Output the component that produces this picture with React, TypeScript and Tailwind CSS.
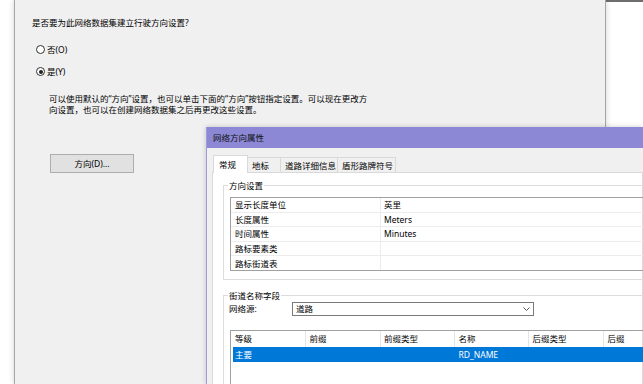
import React from "react";

function Radio({ checked, label, className }: { checked?: boolean; label: string; className: string }) {
  return (
    <div className={className}>
      <span className="w-[9px] h-[9px] rounded-full border border-[#333333] bg-white flex items-center justify-center shrink-0">
        {checked && <span className="w-[4px] h-[4px] rounded-full bg-[#222222]" />}
      </span>
      <span className="ml-[2px] leading-[11px]">{label}</span>
    </div>
  );
}

const rows: [string, string][] = [
  ["显示长度单位", "英里"],
  ["长度属性", "Meters"],
  ["时间属性", "Minutes"],
  ["路标要素类", ""],
  ["路标街道表", ""],
];

export default function App() {
  return (
    <div className="relative w-[643px] h-[384px] overflow-hidden bg-white flex font-['Noto_Sans','Noto_Sans_CJK_SC',sans-serif] text-[8.5px] text-black">
      <div className="w-[14px] shrink-0" />
      {/* back dialog */}
      <div className="relative z-[1] w-[592px] shrink-0 h-full bg-[#f0f0f0] border-x border-[#a6a6a6] shadow-[0_0_6px_rgba(0,0,0,0.18)] flex flex-col pt-[17px]">
        <div className="ml-[17px] leading-[11px]">是否要为此网络数据集建立行驶方向设置?</div>
        <Radio className="ml-[21px] mt-[16px] h-[11px] flex items-center" label="否(O)" />
        <Radio className="ml-[21px] mt-[11px] h-[11px] flex items-center" checked label="是(Y)" />
        <div className="ml-[34px] mt-[16px] leading-[11px]">
          <div>可以使用默认的“方向”设置，也可以单击下面的“方向”按钮指定设置。可以现在更改方</div>
          <div>向设置，也可以在创建网络数据集之后再更改这些设置。</div>
        </div>
        <div className="ml-[35px] mt-[39px] w-[84px] h-[19px] bg-[#e1e1e1] border border-[#adadad] flex items-center justify-center leading-[11px]">
          方向(D)...
        </div>
      </div>
      <div className="flex-1 h-full border-t-2 border-[#6e6e6e]" />

      {/* front dialog */}
      <div className="absolute z-[2] left-[206px] top-[127px] w-[437px] h-[257px] border-l border-[#9f9cdb] shadow-[0_0_5px_rgba(0,0,0,0.2)] flex flex-col bg-[#f0f0f0]">
        <div className="h-[21px] shrink-0 bg-[#8c88d6] flex items-center pl-[6px] leading-[11px] text-[#111111]">网络方向属性</div>
        <div className="flex-1 flex flex-col pl-[5px] pt-[7px]">
          <div className="relative z-[3] ml-[1px] h-[17px] flex items-end leading-[11px]">
            <div className="shrink-0 w-[35px] h-[18px] -mb-[1px] bg-white border border-b-0 border-[#d9d9d9] pl-[5px] flex items-center">常规</div>
            <div className="shrink-0 -ml-[1px] w-[34px] h-[15px] bg-[#f0f0f0] border border-b-0 border-[#d9d9d9] pl-[4px] flex items-center">地标</div>
            <div className="shrink-0 -ml-[1px] w-[58px] h-[15px] bg-[#f0f0f0] border border-b-0 border-[#d9d9d9] pl-[4px] flex items-center">道路详细信息</div>
            <div className="shrink-0 -ml-[1px] w-[59px] h-[15px] bg-[#f0f0f0] border border-b-0 border-[#d9d9d9] pl-[4px] flex items-center">盾形路牌符号</div>
          </div>
          <div className="flex-1 bg-white border border-[#d9d9d9] flex flex-col">
            <fieldset className="ml-[10px] mt-[7px] w-[480px] border border-[#dcdcdc] pb-[8px]">
              <legend className="ml-[4px] px-[1px] leading-[11px]">方向设置</legend>
              <div className="ml-[6px] mt-[6px] w-[460px] border-x border-t border-[#a0a0a0]">
                {rows.map(([k, v], i) => (
                  <div
                    key={k}
                    className={
                      i === rows.length - 1
                        ? "h-[14.6px] flex border-b border-[#a0a0a0]"
                        : "h-[14.6px] flex border-b border-[#ececec]"
                    }
                  >
                    <div className="shrink-0 w-[150px] border-r border-[#ececec] pl-[4px] flex items-center leading-[11px]">{k}</div>
                    <div className="pl-[3px] flex items-center leading-[11px]">{v}</div>
                  </div>
                ))}
              </div>
            </fieldset>
            <fieldset className="ml-[10px] mt-[10px] w-[480px] h-[120px] border border-[#dcdcdc]">
              <legend className="ml-[4px] px-[1px] leading-[11px]">街道名称字段</legend>
              <div className="mt-[1px] h-[14px] flex items-center">
                <div className="shrink-0 pl-[5px] w-[68px] leading-[11px]">网络源:</div>
                <div className="shrink-0 w-[242px] h-[14px] border border-[#7a7a7a] bg-white flex items-center justify-between pl-[3px] pr-[3px] leading-[11px]">
                  <span>道路</span>
                  <svg width="7" height="4" viewBox="0 0 7 4" className="mt-[1px]">
                    <path d="M0.5 0.5 L3.5 3.5 L6.5 0.5" fill="none" stroke="#444444" strokeWidth="0.9" />
                  </svg>
                </div>
              </div>
              <div className="ml-[6px] mt-[14px] w-[460px] h-[80px] border border-[#a0a0a0] flex flex-col leading-[11px]">
                <div className="h-[16px] flex">
                  <div className="shrink-0 w-[75px] border-r border-[#e5e5e5] pl-[4px] flex items-center">等级</div>
                  <div className="shrink-0 w-[75px] border-r border-[#e5e5e5] pl-[3.5px] flex items-center">前缀</div>
                  <div className="shrink-0 w-[74px] border-r border-[#e5e5e5] pl-[3px] flex items-center">前缀类型</div>
                  <div className="shrink-0 w-[74px] border-r border-[#e5e5e5] pl-[3.5px] flex items-center">名称</div>
                  <div className="shrink-0 w-[75px] border-r border-[#e5e5e5] pl-[3.5px] flex items-center">后缀类型</div>
                  <div className="shrink-0 w-[60px] pl-[3.5px] flex items-center">后缀</div>
                </div>
                <div className="ml-[2px] h-[15px] bg-[#0078d7] text-white flex">
                  <div className="shrink-0 w-[73px] pl-[2px] flex items-center">主要</div>
                  <div className="shrink-0 w-[75px]" />
                  <div className="shrink-0 w-[74px]" />
                  <div className="shrink-0 w-[74px] pl-[3.5px] flex items-center">RD_NAME</div>
                </div>
              </div>
            </fieldset>
          </div>
        </div>
      </div>
    </div>
  );
}
